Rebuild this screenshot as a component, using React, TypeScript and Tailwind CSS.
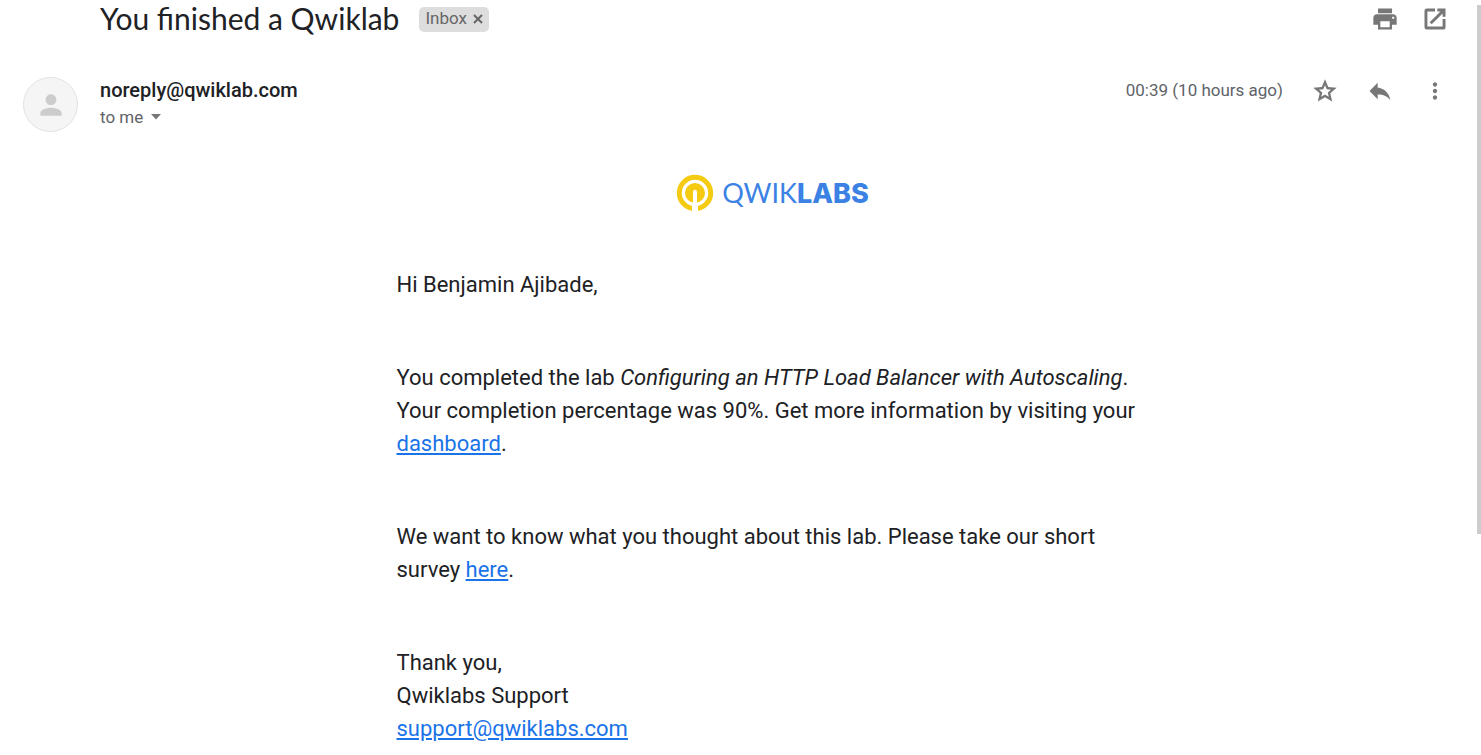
import React from "react";

type IconProps = { path: string; className?: string };

function Icon({ path, className = "size-7" }: IconProps) {
  return (
    <svg viewBox="0 0 24 24" fill="currentColor" className={className} aria-hidden="true">
      <path d={path} />
    </svg>
  );
}

const icons = {
  print:
    "M19 8H5c-1.66 0-3 1.34-3 3v6h4v4h12v-4h4v-6c0-1.66-1.34-3-3-3zm-3 11H8v-5h8v5zm3-7c-.55 0-1-.45-1-1s.45-1 1-1 1 .45 1 1-.45 1-1 1zm-1-9H6v4h12V3z",
  open: "M18.500 18.500h-13v-13H12V3H5a2 2 0 0 0-2 2v14a2 2 0 0 0 2 2h14c1.100 0 2-.9 2-2v-7h-2.500v6.500zM14 3v2.500h2.700l-9.300 9.300 1.800 1.800 9.300-9.300V10H21V3h-7z",
  star: "M22 9.240l-7.190-.62L12 2 9.190 8.630 2 9.240l5.460 4.730L5.820 21 12 17.270 18.180 21l-1.630-7.030L22 9.240zM12 15l-3.200 1.900.85-3.600-2.800-2.450 3.700-.32L12 7.100l1.450 3.430 3.700.32-2.800 2.450.85 3.600L12 15z",
  reply: "M10 9V5l-7 7 7 7v-4.100c5 0 8.500 1.600 11 5.100-1-5-4-10-11-11z",
  more: "M12 8c1.100 0 2-.9 2-2s-.9-2-2-2-2 .9-2 2 .9 2 2 2zm0 2c-1.100 0-2 .9-2 2s.9 2 2 2 2-.9 2-2-.9-2-2-2zm0 6c-1.100 0-2 .9-2 2s.9 2 2 2 2-.9 2-2-.9-2-2-2z",
  person:
    "M12 12c2.210 0 4-1.790 4-4s-1.790-4-4-4-4 1.790-4 4 1.790 4 4 4zm0 2c-2.670 0-8 1.340-8 4v2h16v-2c0-2.660-5.330-4-8-4z",
};

function IconButton({ label, path, className }: { label: string } & IconProps) {
  return (
    <button type="button" aria-label={label} className="flex size-7 items-center justify-center">
      <Icon path={path} className={className} />
    </button>
  );
}

function Logo() {
  return (
    <div className="flex items-center justify-center gap-2 text-[#3b82e4]">
      <svg viewBox="0 0 38 38" className="size-[38px]" aria-hidden="true">
        <circle cx="19" cy="19" r="15.700" fill="none" stroke="#f5cb11" strokeWidth="5" />
        <path d="M16 38V28h6v10z" fill="#fff" />
        <circle cx="19" cy="19" r="10" fill="#f5cb11" />
        <path d="M17 38V17.800a2 2 0 0 1 4 0V38z" fill="#fff" />
      </svg>
      <span className="font-['Lato',sans-serif] text-[27px] leading-9">
        QWIK<span className="font-['Inter',sans-serif] font-extrabold">LABS</span>
      </span>
    </div>
  );
}

function MailLink({ href, children }: { href: string; children: React.ReactNode }) {
  return (
    <a href={href} className="text-[#1a73e8] underline">
      {children}
    </a>
  );
}

export default function App() {
  return (
    <div className="flex min-h-screen bg-white font-['Roboto',sans-serif] text-[#202124]">
      <main className="min-w-0 flex-1 pr-7 pl-[23px]">
        <header className="flex h-[38px] items-center pl-[77px]">
          <h1 className="pb-0.5 font-['Lato',sans-serif] text-[30px] leading-9">You finished a Qwiklab</h1>
          <div className="ml-5 flex h-[25px] items-center gap-1.5 rounded-[5px] bg-[#ddd] px-1.5 text-[#666]">
            <span className="text-[17px]">Inbox</span>
            <button type="button" aria-label="Remove label Inbox">
              <svg viewBox="0 0 10 10" className="size-2.5" stroke="currentColor" strokeWidth="2" aria-hidden="true">
                <path d="M1 1l8 8M9 1L1 9" />
              </svg>
            </button>
          </div>
          <div className="ml-auto flex gap-[22px] text-[#777]">
            <IconButton label="Print all" path={icons.print} />
            <IconButton label="Open in new window" path={icons.open} />
          </div>
        </header>

        <section className="mt-[39px] flex items-start">
          <div className="flex size-[55px] shrink-0 items-center justify-center rounded-full border border-[#e2e2e2] bg-[#f5f5f5] text-[#ccc]">
            <Icon path={icons.person} className="size-8" />
          </div>
          <div className="ml-[22px] flex flex-col">
            <h2 className="text-xl leading-[27px] font-medium">noreply@qwiklab.com</h2>
            <button type="button" className="flex items-center gap-2 text-[17px] leading-[26px] text-[#5f6368]">
              to me
              <svg viewBox="0 0 10 6" className="h-1.5 w-2.5" fill="#777" aria-hidden="true">
                <path d="M0 0h10L5 5.500z" />
              </svg>
            </button>
          </div>
          <div className="ml-auto flex h-7 items-center text-[#777]">
            <time className="mr-7 text-[17px] text-[#5f6368]">00:39 (10 hours ago)</time>
            <div className="flex gap-[27px]">
              <IconButton label="Star" path={icons.star} />
              <IconButton label="Reply" path={icons.reply} />
              <IconButton label="More" path={icons.more} className="size-[26px]" />
            </div>
          </div>
        </section>

        <article className="mt-[42px] pr-1 pl-[77px]">
          <Logo />
          <div className="mx-auto mt-14 flex max-w-[752px] flex-col gap-15 text-[22px] leading-[33px]">
            <p>Hi Benjamin Ajibade,</p>
            <p>
              You completed the lab <em>Configuring an HTTP Load Balancer with Autoscaling</em>. Your completion
              percentage was 90%. Get more information by visiting your <MailLink href="#dashboard">dashboard</MailLink>.
            </p>
            <p>
              We want to know what you thought about this lab. Please take our short survey{" "}
              <MailLink href="#survey">here</MailLink>.
            </p>
            <p>
              Thank you,
              <br />
              Qwiklabs Support
              <br />
              <MailLink href="mailto:support@qwiklabs.com">support@qwiklabs.com</MailLink>
            </p>
          </div>
        </article>
      </main>
      <div className="mt-[5px] h-[70vh] w-1 shrink-0 bg-[#ccc]" aria-hidden="true" />
    </div>
  );
}
